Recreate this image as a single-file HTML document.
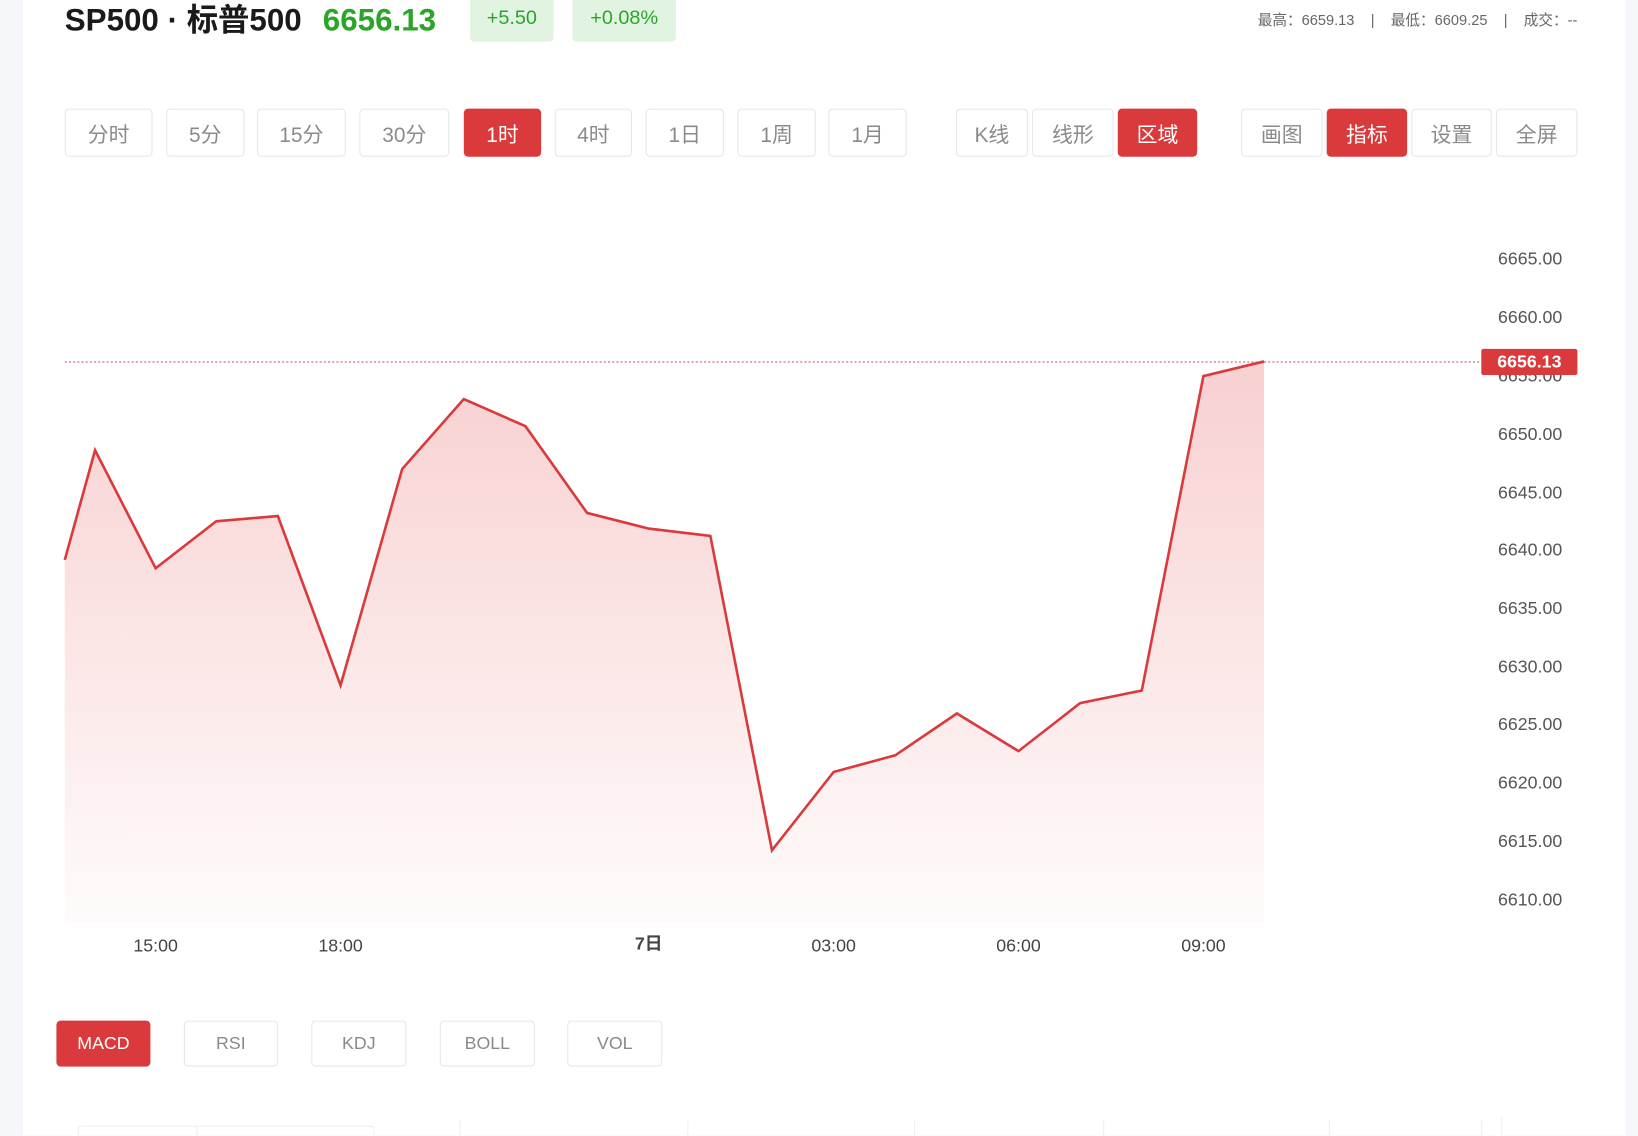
<!DOCTYPE html>
<html><head><meta charset="utf-8">
<style>
html,body{margin:0;padding:0;width:1638px;height:1136px;overflow:hidden;background:#f6f7fb;}
#w{position:absolute;left:0;top:0;width:1568px;height:1087px;transform:scale(1.04464);transform-origin:0 0;font-family:"Liberation Sans","Noto Sans CJK SC",sans-serif;}
#panel{position:absolute;left:22px;top:0;width:1534px;height:1087px;background:#fff;}
.a{position:absolute;white-space:nowrap;}
.b{position:absolute;box-sizing:border-box;border:1px solid #e6e6e6;border-radius:4px;background:#fff;color:#8a8a8a;font-size:20px;display:flex;align-items:center;justify-content:center;}
.r{background:#da3a3c;border-color:#da3a3c;color:#fff;}
.s{font-size:17px;}
.yl{position:absolute;left:1434px;font-size:17px;color:#555;line-height:20px;}
.xl{position:absolute;top:896px;font-size:17px;color:#444;transform:translateX(-50%);line-height:20px;}
</style></head><body>
<div id="w">
<div id="panel"></div>
<div class="a" style="left:62px;top:0;height:40px;line-height:40px;font-size:30px;font-weight:bold;color:#1a1a1a;">SP500 · 标普500</div>
<div class="a" style="left:309px;top:0;height:40px;line-height:40px;font-size:30px;font-weight:bold;color:#2aa52a;">6656.13</div>
<div class="a" style="left:450px;top:-4px;width:80px;height:44px;background:#e1f4e1;border-radius:4px;color:#2aa52a;font-size:19px;display:flex;align-items:center;justify-content:center;">+5.50</div>
<div class="a" style="left:548px;top:-4px;width:99px;height:44px;background:#e1f4e1;border-radius:4px;color:#2aa52a;font-size:19px;display:flex;align-items:center;justify-content:center;">+0.08%</div>
<div class="a" style="right:58px;top:9px;font-size:14px;color:#666;">最高：6659.13 &nbsp;&nbsp;&nbsp;| &nbsp;&nbsp;&nbsp;最低：6609.25 &nbsp;&nbsp;&nbsp;| &nbsp;&nbsp;&nbsp;成交：--</div>

<div class="b" style="left:62px;top:104px;width:84px;height:46px;">分时</div>
<div class="b" style="left:159px;top:104px;width:75px;height:46px;">5分</div>
<div class="b" style="left:246px;top:104px;width:85px;height:46px;">15分</div>
<div class="b" style="left:344px;top:104px;width:86px;height:46px;">30分</div>
<div class="b r" style="left:444px;top:104px;width:74px;height:46px;">1时</div>
<div class="b" style="left:531px;top:104px;width:74px;height:46px;">4时</div>
<div class="b" style="left:618px;top:104px;width:75px;height:46px;">1日</div>
<div class="b" style="left:706px;top:104px;width:75px;height:46px;">1周</div>
<div class="b" style="left:793px;top:104px;width:75px;height:46px;">1月</div>
<div class="b" style="left:915px;top:104px;width:69px;height:46px;">K线</div>
<div class="b" style="left:988px;top:104px;width:78px;height:46px;">线形</div>
<div class="b r" style="left:1070px;top:104px;width:76px;height:46px;">区域</div>
<div class="b" style="left:1188px;top:104px;width:78px;height:46px;">画图</div>
<div class="b r" style="left:1270px;top:104px;width:77px;height:46px;">指标</div>
<div class="b" style="left:1351px;top:104px;width:77px;height:46px;">设置</div>
<div class="b" style="left:1432px;top:104px;width:78px;height:46px;">全屏</div>

<svg class="a" style="left:0;top:0" width="1568" height="1087">
<defs><linearGradient id="g" x1="0" y1="0" x2="0" y2="1"><stop offset="0" stop-color="#e23b3b" stop-opacity="0.24"/><stop offset="1" stop-color="#e23b3b" stop-opacity="0.02"/></linearGradient></defs>
<path d="M62,536 L91,431 L149,544 L207,499 L266,494 L326,656 L385,449 L444,382 L503,408 L562,491 L621,506 L680,513 L739,814 L798,739 L857,723 L916,683 L975,719 L1034,673 L1093,661 L1152,360 L1210,346 L1210,882 L62,882 Z" fill="url(#g)"/>
<line x1="62" y1="346.5" x2="1418" y2="346.5" stroke="#b55" stroke-width="1" stroke-dasharray="2,2"/>
<polyline points="62,536 91,431 149,544 207,499 266,494 326,656 385,449 444,382 503,408 562,491 621,506 680,513 739,814 798,739 857,723 916,683 975,719 1034,673 1093,661 1152,360 1210,346" fill="none" stroke="#da3a3c" stroke-width="2.5" stroke-linejoin="miter"/>
<g stroke="#eee" stroke-width="1">
<line x1="188.5" y1="1077" x2="188.5" y2="1087"/><line x1="440.5" y1="1072" x2="440.5" y2="1087"/><line x1="658.5" y1="1072" x2="658.5" y2="1087"/><line x1="875.5" y1="1072" x2="875.5" y2="1087"/><line x1="1056.5" y1="1072" x2="1056.5" y2="1087"/><line x1="1272.5" y1="1072" x2="1272.5" y2="1087"/><line x1="1418.5" y1="1072" x2="1418.5" y2="1087"/><line x1="1437.5" y1="1070" x2="1437.5" y2="1087"/>
<path d="M75,1087 L75,1081 Q75,1078 78,1078 L355,1078 Q358,1078 358,1081 L358,1087" fill="none"/>
</g>
</svg>

<div class="yl" style="top:238px;">6665.00</div>
<div class="yl" style="top:294px;">6660.00</div>
<div class="yl" style="top:350px;">6655.00</div>
<div class="yl" style="top:406px;">6650.00</div>
<div class="yl" style="top:462px;">6645.00</div>
<div class="yl" style="top:517px;">6640.00</div>
<div class="yl" style="top:573px;">6635.00</div>
<div class="yl" style="top:629px;">6630.00</div>
<div class="yl" style="top:684px;">6625.00</div>
<div class="yl" style="top:740px;">6620.00</div>
<div class="yl" style="top:796px;">6615.00</div>
<div class="yl" style="top:852px;">6610.00</div>
<div class="a" style="left:1418px;top:334px;width:92px;height:25px;background:#da3a3c;border-radius:2px;color:#fff;font-size:17px;font-weight:bold;display:flex;align-items:center;justify-content:center;">6656.13</div>

<div class="xl" style="left:149px;">15:00</div>
<div class="xl" style="left:326px;">18:00</div>
<div class="xl" style="left:621px;font-weight:bold;top:894px;">7日</div>
<div class="xl" style="left:798px;">03:00</div>
<div class="xl" style="left:975px;">06:00</div>
<div class="xl" style="left:1152px;">09:00</div>

<div class="b r s" style="left:54px;top:977px;width:90px;height:44px;">MACD</div>
<div class="b s" style="left:176px;top:977px;width:90px;height:44px;">RSI</div>
<div class="b s" style="left:298px;top:977px;width:91px;height:44px;">KDJ</div>
<div class="b s" style="left:421px;top:977px;width:91px;height:44px;">BOLL</div>
<div class="b s" style="left:543px;top:977px;width:91px;height:44px;">VOL</div>
</div>
</body></html>
